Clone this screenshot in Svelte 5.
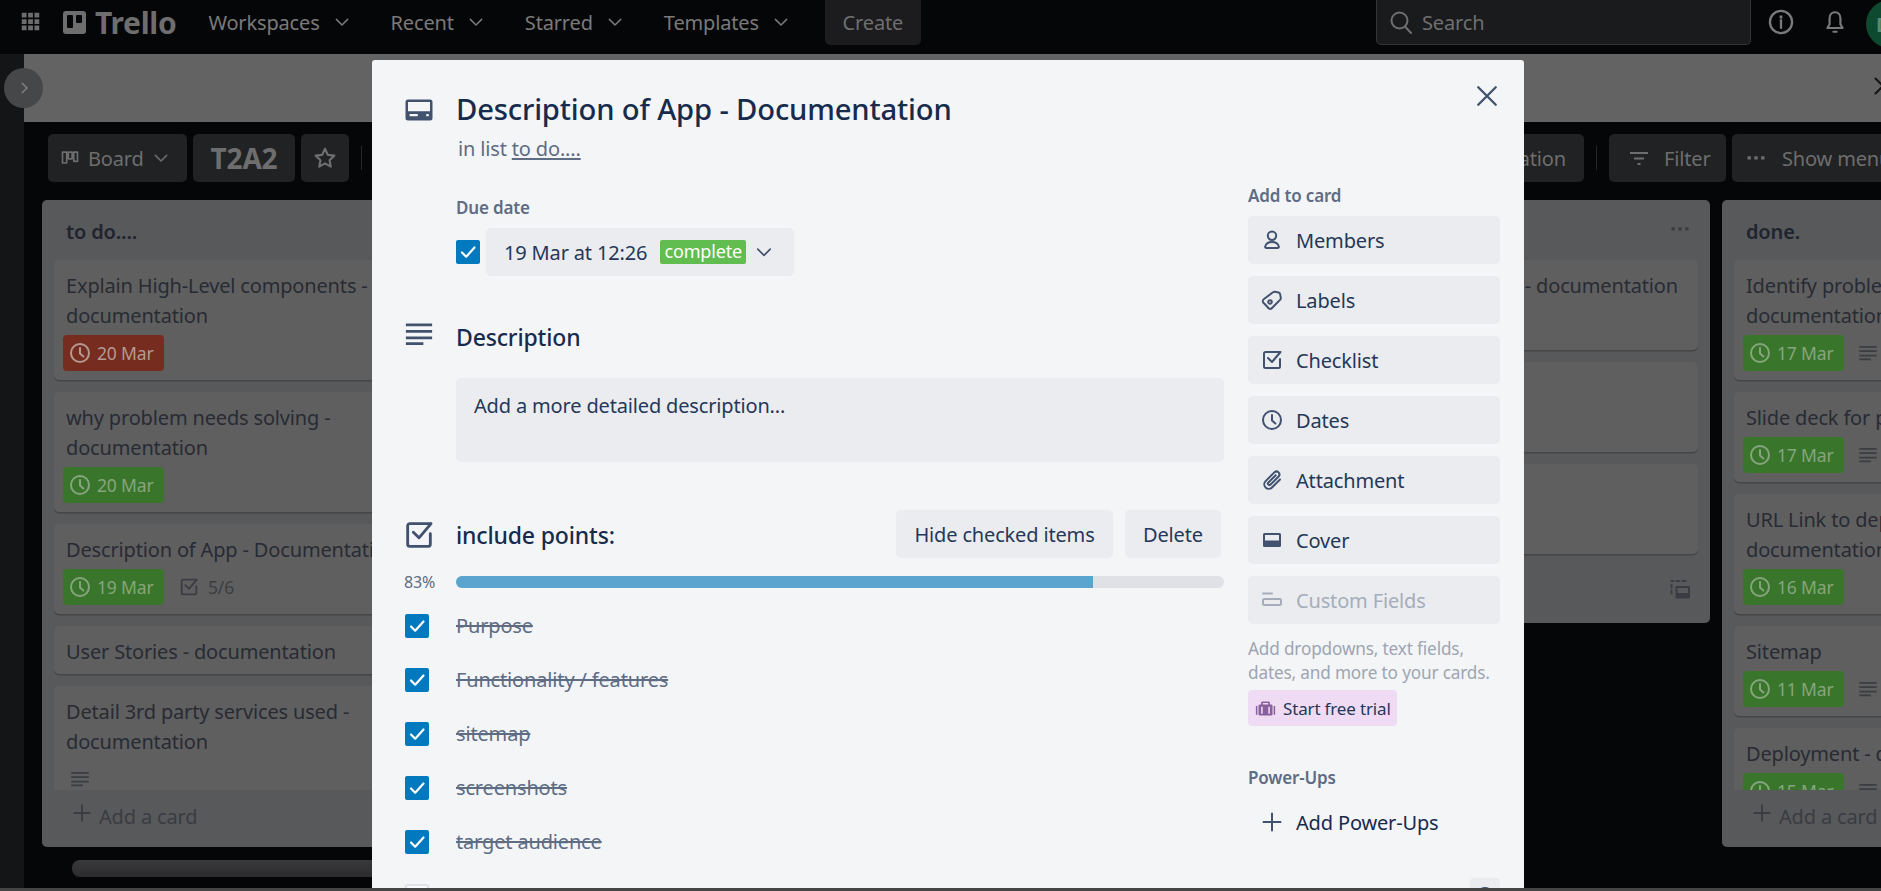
<script>
  const icons = {
    clock: { s: ['M12 3a9 9 0 1 0 0 18a9 9 0 0 0 0-18z', 'M12 7v5.5l3.4 3'] },
    lines: { f: ['M1.5 3.6h21v2.1h-21zM1.5 8.8h21v2.1h-21zM1.5 14h21v2.1h-21zM1.5 18.6h14v2.1h-14z'] },
    card: { f: ['M1.2 5.6a2 2 0 0 1 2-2h17.6a2 2 0 0 1 2 2v12.8a2 2 0 0 1-2 2H3.2a2 2 0 0 1-2-2zM3.2 5.6v7.4h17.6V5.6zM4.5 15.2V17h6.5v-1.8zM17.8 15.2V17h2v-1.8z'] },
    check: { s: ['M20 4H5.5A1.5 1.5 0 0 0 4 5.5v13A1.5 1.5 0 0 0 5.5 20h13a1.5 1.5 0 0 0 1.5-1.5V11', 'M8 10l4 4 8.5-10'] },
    person: { s: ['M12 3.5a4.2 4.2 0 1 0 0 8.4a4.2 4.2 0 0 0 0-8.4z', 'M6.5 20h11c1 0 1.5-.6 1.3-1.5C18 15.5 15.5 14 12 14s-6 1.5-6.8 4.5C5 19.4 5.5 20 6.5 20z'] },
    tag: { s: ['M4 11l9-6.7a2.5 2.5 0 0 1 2-.5l3.5.7a2 2 0 0 1 1.6 1.6l.7 3.5a2.5 2.5 0 0 1-.5 2L12 20a2.5 2.5 0 0 1-3.4.3L4 15.3a2.5 2.5 0 0 1 0-4.3z', 'M10 12.2a1.8 1.8 0 1 0 0 3.6a1.8 1.8 0 0 0 0-3.6z'] },
    clip: { s: ['M20 11.5l-8 8a4.5 4.5 0 0 1-6.4-6.4l9-9a3 3 0 0 1 4.2 4.2l-8.5 8.5a1.5 1.5 0 0 1-2.1-2.1l7.5-7.5'] },
    cover: { f: ['M3 6.5A1.5 1.5 0 0 1 4.5 5h15A1.5 1.5 0 0 1 21 6.5v11a1.5 1.5 0 0 1-1.5 1.5h-15A1.5 1.5 0 0 1 3 17.5zM5 7v5.5h14V7z'] },
    custom: { s: ['M3 5.5h9', 'M4.5 11h15a1.5 1.5 0 0 1 1.5 1.5v3a1.5 1.5 0 0 1-1.5 1.5h-15A1.5 1.5 0 0 1 3 15.5v-3A1.5 1.5 0 0 1 4.5 11z'] },
    plus: { s: ['M12 3.5v17M3.5 12h17'] },
    chevron: { s: ['M4.5 8.5 12 16l7.5-7.5'] },
    close: { s: ['M4.5 4.5l15 15M19.5 4.5l-15 15'] },
    search: { s: ['M10.5 2.5a8 8 0 1 0 0 16a8 8 0 0 0 0-16z', 'M16 16.5l6 6.5'] },
    info: { s: ['M12 2.5a9.5 9.5 0 1 0 0 19a9.5 9.5 0 0 0 0-19z', 'M12 10.5v6.5'], f: ['M10.8 6.5h2.4v2.4h-2.4z'] },
    bell: { s: ['M12 3c-3 0-5 2.3-5 5.5V14l-2 3.5h14L17 14V8.5C17 5.3 15 3 12 3z', 'M10.5 21h3'] },
    star: { s: ['M12 3.5l2.6 5.6 6 .7-4.4 4.2 1.1 6L12 17l-5.3 3 1.1-6-4.4-4.2 6-.7z'] },
    filter: { f: ['M3 6h18v2H3zM7 11.5h10v2H7zM10.5 17h3v2h-3z'] },
    dots: { f: ['M3.5 10.2h3.4v3.4H3.5zM10.3 10.2h3.4v3.4h-3.4zM17.1 10.2h3.4v3.4h-3.4z'] },
    board: { s: ['M3 5h5v13H3zM10 5h4.5v8H10zM16.5 5H21v11h-4.5z'] },
    grid: { f: ['M2 2h5.5v5.5H2zM9.3 2h5.5v5.5H9.3zM16.5 2H22v5.5h-5.5zM2 9.3h5.5v5.5H2zM9.3 9.3h5.5v5.5H9.3zM16.5 9.3H22v5.5h-5.5zM2 16.5h5.5V22H2zM9.3 16.5h5.5V22H9.3zM16.5 16.5H22V22h-5.5z'] },
    brief: { f: ['M7 7.5V5.5A1.5 1.5 0 0 1 8.5 4h7A1.5 1.5 0 0 1 17 5.5v2h1.5A1.5 1.5 0 0 1 20 9v9.5a1.5 1.5 0 0 1-1.5 1.5h-13A1.5 1.5 0 0 1 4 18.5V9a1.5 1.5 0 0 1 1.5-1.5zM9 5.8v1.7h6V5.8zM7 10v8h1.8v-8zM15.2 10v8H17v-8zM1 9h1.7v10H1zM21.3 9H23v10h-1.7z'] },
    template: { s: ['M9 10h11.5a.5.5 0 0 1 .5.5V20a.5.5 0 0 1-.5.5H9a.5.5 0 0 1-.5-.5v-9.5a.5.5 0 0 1 .5-.5z', 'M3.5 4h2M8.5 4h3M14.5 4h3M3.5 8v2.5M3.5 13.5v3'], f: ['M9 16h12v4H9z'] }
  };

  const sideActions = [
    { icon: 'person', label: 'Members' },
    { icon: 'tag', label: 'Labels' },
    { icon: 'check', label: 'Checklist' },
    { icon: 'clock', label: 'Dates' },
    { icon: 'clip', label: 'Attachment' },
    { icon: 'cover', label: 'Cover' },
    { icon: 'custom', label: 'Custom Fields', disabled: true }
  ];

  const items = ['Purpose', 'Functionality / features', 'sitemap', 'screenshots', 'target audience'];

  const nav = ['Workspaces', 'Recent', 'Starred', 'Templates'];

  const lists = [
    {
      title: 'to do....',
      cards: [
        { text: 'Explain High-Level components - documentation', date: '20 Mar', tone: 'red' },
        { text: 'why problem needs solving - documentation', date: '20 Mar', tone: 'green' },
        { text: 'Description of App - Documentation', date: '19 Mar', tone: 'green', progress: '5/6' },
        { text: 'User Stories - documentation' },
        { text: 'Detail 3rd party services used - documentation', desc: true }
      ]
    },
    { title: 'doing', cards: [] },
    { title: 'review', cards: [] },
    {
      title: 'testing',
      menu: true,
      cards: [
        { text: 'Project Management - documentation', date: '21 Mar', tone: 'green' },
        { text: 'Wireframes', date: '21 Mar', tone: 'green' },
        { text: 'Dataflow Diagram', date: '21 Mar', tone: 'green' }
      ]
    },
    {
      title: 'done.',
      cards: [
        { text: 'Identify problem solved by app - documentation', date: '17 Mar', tone: 'green', desc: true },
        { text: 'Slide deck for presentation', date: '17 Mar', tone: 'green', desc: true },
        { text: 'URL Link to deployed app - documentation', date: '16 Mar', tone: 'green' },
        { text: 'Sitemap', date: '11 Mar', tone: 'green', desc: true },
        { text: 'Deployment - documentation', date: '15 Mar', tone: 'green', desc: true }
      ]
    }
  ];
</script>

{#snippet icon(name, cls = '')}
  <svg class="ico {cls}" viewBox="0 0 24 24" aria-hidden="true">
    {#each icons[name].s ?? [] as d}
      <path {d} class="stroke" />
    {/each}
    {#each icons[name].f ?? [] as d}
      <path {d} class="solid" />
    {/each}
  </svg>
{/snippet}

{#snippet tick()}
  <span class="tick">
    <svg viewBox="0 0 24 24" aria-hidden="true"><path d="M6 12.5l4.2 4.2L18.5 7.5" /></svg>
  </span>
{/snippet}

<div class="page">
  <header class="topbar">
    {@render icon('grid', 'i-grid')}
    <div class="logo">
      <span class="logo-mark"><i class="bar-a"></i><i class="bar-b"></i></span>
      <span class="logo-word">Trello</span>
    </div>
    <nav class="nav">
      {#each nav as n}
        <span class="nav-item">{n}{@render icon('chevron', 'i-chev')}</span>
      {/each}
    </nav>
    <button class="create">Create</button>
    <div class="top-right">
      <div class="search">{@render icon('search', 'i-search')}<span>Search</span></div>
      {@render icon('info', 'i-info')}
      {@render icon('bell', 'i-bell')}
      <span class="avatar">D</span>
    </div>
  </header>

  <div class="workspace">
    <aside class="rail">
      <span class="expand">
        <svg viewBox="0 0 24 24" aria-hidden="true"><path d="M9.5 6l6 6-6 6" /></svg>
      </span>
    </aside>
    <main class="board">
      <div class="banner">{@render icon('close', 'i-banner-close')}</div>
      <div class="toolbar">
        <button class="tb tb-board">{@render icon('board', 'i-tb-small')}<span>Board</span>{@render icon('chevron', 'i-chev')}</button>
        <button class="tb tb-name">T2A2</button>
        <button class="tb tb-star">{@render icon('star', 'i-star')}</button>
        <span class="sep"></span>
        <div class="tb-right">
          <button class="tb tb-auto">Automation</button>
          <span class="sep"></span>
          <button class="tb tb-filter">{@render icon('filter', 'i-tb')}<span>Filter</span></button>
          <button class="tb tb-menu">{@render icon('dots', 'i-tb')}<span>Show menu</span></button>
        </div>
      </div>

      <div class="lists">
        {#each lists as list}
          <section class="list">
            <div class="list-head">
              <h2>{list.title}</h2>
              {#if list.menu}{@render icon('dots', 'i-list-menu')}{/if}
            </div>
            <div class="cards">
              {#each list.cards as c}
                <article class="card">
                  <p>{c.text}</p>
                  {#if c.date || c.desc}
                    <div class="badges">
                      {#if c.date}
                        <span class="due {c.tone}">{@render icon('clock', 'i-due')}{c.date}</span>
                      {/if}
                      {#if c.desc}{@render icon('lines', 'i-card-desc')}{/if}
                      {#if c.progress}
                        <span class="progress-badge">{@render icon('check', 'i-badge')}{c.progress}</span>
                      {/if}
                    </div>
                  {/if}
                </article>
              {/each}
            </div>
            {#if list.cards.length}
              <div class="composer">
                {@render icon('plus', 'i-add')}<span>Add a card</span>
                {@render icon('template', 'i-template')}
              </div>
            {/if}
          </section>
        {/each}
      </div>
      <div class="h-scroll"></div>
    </main>
  </div>

  <div class="modal" role="dialog">
    <button class="modal-close" aria-label="Close">{@render icon('close', 'i-close')}</button>

    <div class="main">
      <section class="row title-row">
        <span class="gutter">{@render icon('card', 'i-head')}</span>
        <div>
          <h1>Description of App - Documentation</h1>
          <p class="in-list">in list <u>to do....</u></p>
        </div>
      </section>

      <section class="row due-row">
        <span class="gutter"></span>
        <div>
          <h3>Due date</h3>
          <div class="due-line">
            {@render tick()}
            <button class="due-btn">
              <span>19 Mar at 12:26</span>
              <span class="complete">complete</span>
              {@render icon('chevron', 'i-due-chev')}
            </button>
          </div>
        </div>
      </section>

      <section class="row desc-row">
        <span class="gutter">{@render icon('lines', 'i-head')}</span>
        <div>
          <h2 class="section-title">Description</h2>
          <div class="desc-box">Add a more detailed description...</div>
        </div>
      </section>

      <section class="row check-row">
        <span class="gutter">{@render icon('check', 'i-head-check')}</span>
        <div class="check-head">
          <h2 class="section-title">include points:</h2>
          <div class="check-actions">
            <button class="btn hide-btn">Hide checked items</button>
            <button class="btn delete-btn">Delete</button>
          </div>
        </div>
      </section>

      <section class="row progress-row">
        <span class="gutter pct">83%</span>
        <div class="track"><div class="fill" style="width: 83%"></div></div>
      </section>

      <ul class="items">
        {#each items as item}
          <li class="row item">
            <span class="gutter">{@render tick()}</span>
            <span class="item-text">{item}</span>
          </li>
        {/each}
        <li class="row item">
          <span class="gutter"><span class="tick empty"></span></span>
          <span class="item-text open">tech stack</span>
        </li>
      </ul>
    </div>

    <aside class="side">
      <h3>Add to card</h3>
      <div class="side-actions">
        {#each sideActions as a}
          <button class="btn side-btn" class:disabled={a.disabled}>
            {@render icon(a.icon, 'i-side')}<span>{a.label}</span>
          </button>
        {/each}
      </div>
      <p class="hint">Add dropdowns, text fields, dates, and more to your cards.</p>
      <button class="trial">{@render icon('brief', 'i-brief')}<span>Start free trial</span></button>
      <h3 class="powerups">Power-Ups</h3>
      <button class="add-power">{@render icon('plus', 'i-side')}<span>Add Power-Ups</span></button>
      <span class="corner-btn"><i></i></span>
    </aside>
  </div>

  <div class="bottom-strip"></div>
</div>

<style>
  :global(body) {
    margin: 0;
    background: #050608;
  }
  * {
    box-sizing: border-box;
  }
  .page {
    position: relative;
    width: 100vw;
    height: 100vh;
    overflow: hidden;
    display: flex;
    flex-direction: column;
    font-family: 'Noto Sans', 'Open Sans', sans-serif;
    font-size: 20px;
    letter-spacing: -0.008em;
    color: #172b4d;
  }
  button {
    font: inherit;
    letter-spacing: inherit;
    border: 0;
    margin: 0;
    padding: 0;
    color: inherit;
    background: none;
  }
  h1, h2, h3, p, ul {
    margin: 0;
    padding: 0;
  }
  ul {
    list-style: none;
  }
  .ico {
    display: block;
    flex: none;
    width: 24px;
    height: 24px;
    overflow: visible;
  }
  .stroke {
    fill: none;
    stroke: currentColor;
    stroke-width: 2;
    stroke-linecap: round;
    stroke-linejoin: round;
  }
  .solid {
    fill: currentColor;
    fill-rule: evenodd;
  }

  /* top bar */
  .topbar {
    flex: none;
    height: 54px;
    background: #050608;
    display: flex;
    align-items: flex-start;
    padding-left: 20px;
    color: #7a7a7a;
  }
  .ico.i-grid {
    width: 21px;
    height: 21px;
    margin-top: 11px;
    color: #6d6d6d;
  }
  .logo {
    display: flex;
    align-items: center;
    gap: 9px;
    margin-left: 22px;
    height: 44px;
    color: #6e6e6e;
  }
  .logo-mark {
    width: 23px;
    height: 23px;
    border-radius: 3px;
    background: #6e6e6e;
    display: flex;
    gap: 3px;
    padding: 4px;
    align-items: flex-start;
  }
  .logo-mark i {
    display: block;
    width: 6px;
    background: #050608;
    border-radius: 1px;
  }
  .bar-a { height: 13px; }
  .bar-b { height: 8px; }
  .logo-word {
    font-size: 30px;
    font-weight: 700;
    letter-spacing: -0.3px;
  }
  .nav {
    display: flex;
    margin-left: 32px;
    height: 44px;
    align-items: center;
  }
  .nav-item {
    display: flex;
    align-items: center;
    gap: 13px;
    margin-right: 40px;
    white-space: nowrap;
  }
  .ico.i-chev {
    width: 18px;
    height: 18px;
    stroke-width: 1;
  }
  .create {
    width: 96px;
    height: 45px;
    margin-left: -5px;
    background: #1c1c1e;
    border-radius: 0 0 5px 5px;
    color: #6f6f6f;
  }
  .top-right {
    margin-left: auto;
    margin-right: -33px;
    display: flex;
    align-items: flex-start;
  }
  .search {
    width: 375px;
    height: 45px;
    background: #1a1b1d;
    border: 1px solid #343537;
    border-top: 0;
    border-radius: 0 0 5px 5px;
    display: flex;
    align-items: center;
    gap: 9px;
    padding-left: 12px;
    color: #6f6f6f;
  }
  .ico.i-search {
    width: 24px;
    height: 24px;
  }
  .ico.i-info {
    width: 28px;
    height: 28px;
    margin: 8px 0 0 16px;
  }
  .ico.i-bell {
    width: 26px;
    height: 26px;
    margin: 9px 0 0 27px;
  }
  .avatar {
    width: 48px;
    height: 48px;
    margin: 0 0 0 18px;
    border-radius: 50%;
    background: #0e4a2f;
    color: #5a8a72;
    display: flex;
    align-items: center;
    padding-left: 10px;
    font-weight: 700;
  }

  /* board */
  .workspace {
    flex: 1;
    display: flex;
    min-height: 0;
    position: relative;
  }
  .rail {
    flex: none;
    width: 24px;
    background: #141517;
  }
  .expand {
    position: absolute;
    left: 4px;
    top: 14px;
    width: 39px;
    height: 40px;
    border-radius: 50%;
    background: #464748;
    display: flex;
    align-items: center;
    justify-content: center;
  }
  .expand svg {
    width: 20px;
    height: 20px;
    fill: none;
    stroke: #7d7d7d;
    stroke-width: 2;
  }
  .board {
    flex: 1;
    min-width: 0;
    display: flex;
    flex-direction: column;
    background: #050608;
  }
  .banner {
    flex: none;
    height: 68px;
    background: #636363;
    display: flex;
    justify-content: flex-end;
    padding-top: 20px;
  }
  .ico.i-banner-close {
    width: 24px;
    height: 24px;
    margin-right: -14px;
    color: #151515;
  }
  .toolbar {
    flex: none;
    height: 78px;
    display: flex;
    align-items: flex-start;
    gap: 6px;
    padding: 12px 0 0 24px;
  }
  .tb {
    height: 48px;
    background: #212224;
    border-radius: 5px;
    color: #6e6e6e;
    display: flex;
    align-items: center;
    white-space: nowrap;
  }
  .tb-board {
    width: 139px;
    padding-left: 12px;
    gap: 8px;
  }
  .ico.i-tb-small {
    width: 20px;
    height: 20px;
  }
  .tb-name {
    width: 102px;
    justify-content: center;
    font-size: 28px;
    font-weight: 700;
  }
  .tb-star {
    width: 48px;
    justify-content: center;
  }
  .ico.i-star {
    width: 26px;
    height: 26px;
  }
  .sep {
    flex: none;
    width: 1px;
    height: 24px;
    margin: 12px 6px;
    background: #26272a;
  }
  .tb-right {
    margin-left: auto;
    margin-right: -50px;
    display: flex;
    align-items: flex-start;
    gap: 6px;
  }
  .tb-auto {
    width: 220px;
    justify-content: flex-end;
    padding-right: 18px;
  }
  .tb-filter {
    width: 117px;
    padding-left: 18px;
    gap: 13px;
  }
  .tb-menu {
    width: 199px;
    padding-left: 12px;
    gap: 14px;
  }
  .ico.i-tb {
    width: 24px;
    height: 24px;
  }

  .lists {
    flex: none;
    height: 647px;
    display: flex;
    align-items: flex-start;
    gap: 12px;
    padding-left: 18px;
  }
  .list {
    flex: none;
    width: 408px;
    background: #58595b;
    border-radius: 5px;
    overflow: hidden;
  }
  .list-head {
    height: 60px;
    padding: 17px 18px 0 24px;
    display: flex;
    justify-content: space-between;
  }
  .list-head h2 {
    font-size: 20px;
    font-weight: 600;
    line-height: 30px;
    color: #20242e;
  }
  .ico.i-list-menu {
    width: 24px;
    height: 24px;
    color: #3d3e42;
  }
  .cards {
    max-height: 530px;
    overflow: hidden;
    padding: 0 12px;
  }
  .card {
    background: #5f5f60;
    border-radius: 5px;
    box-shadow: 0 1.5px 0 #454648;
    padding: 11px 12px 7px;
    margin-bottom: 12px;
  }
  .card p {
    line-height: 30px;
    color: #282b33;
  }
  .badges {
    display: flex;
    align-items: center;
    min-height: 36px;
    margin: 4px 0 2px -3px;
    color: #3b3d41;
    white-space: nowrap;
  }
  .due {
    width: 101px;
    height: 36px;
    border-radius: 4px;
    display: flex;
    align-items: center;
    gap: 7px;
    padding-left: 7px;
    font-size: 17.5px;
  }
  .due.red {
    background: #772c20;
    color: #b39a93;
  }
  .due.green {
    background: #3a752c;
    color: #86a57d;
  }
  .ico.i-due {
    width: 24px;
    height: 24px;
    margin: 0 -2px;
  }
  .ico.i-card-desc {
    width: 20px;
    height: 20px;
    margin-left: 14px;
  }
  .ico.i-card-desc:first-child {
    margin-left: 7px;
  }
  .progress-badge {
    display: flex;
    align-items: center;
    gap: 8px;
    margin-left: 14px;
    font-size: 17.5px;
  }
  .ico.i-badge {
    width: 22px;
    height: 22px;
  }
  .composer {
    position: relative;
    height: 57px;
    display: flex;
    align-items: flex-start;
    gap: 6px;
    padding: 10px 0 0 29px;
    color: #3a3c41;
    line-height: 30px;
  }
  .composer span {
    margin-top: 2px;
  }
  .ico.i-add {
    width: 22px;
    height: 22px;
    margin-top: 2px;
    stroke-width: 1;
  }
  .ico.i-template {
    width: 24px;
    height: 24px;
    margin: 1px 18px 0 auto;
    display: none;
  }
  .list:nth-child(4) .ico.i-template {
    display: block;
  }
  .h-scroll {
    flex: none;
    width: 1350px;
    height: 17px;
    margin: 13px 0 0 48px;
    border-radius: 8px;
    background: linear-gradient(#39393b, #2c2c2e);
  }

  /* modal */
  .modal {
    position: absolute;
    left: 372px;
    top: 60px;
    bottom: 3px;
    width: 1152px;
    background: #f4f5f7;
    border-radius: 3px 3px 0 0;
    overflow: hidden;
    display: flex;
    gap: 24px;
    padding-right: 24px;
  }
  .modal-close {
    position: absolute;
    top: 18px;
    right: 19px;
    width: 36px;
    height: 36px;
    display: flex;
    align-items: center;
    justify-content: center;
    color: #42526e;
  }
  .ico.i-close {
    width: 28px;
    height: 28px;
  }
  .main {
    flex: none;
    width: 852px;
  }
  .row {
    display: grid;
    grid-template-columns: 84px 1fr;
  }
  .gutter {
    display: block;
    padding-left: 32px;
    color: #42526e;
  }
  .ico.i-head {
    width: 30px;
    height: 30px;
  }
  .ico.i-head-check {
    width: 34px;
    height: 34px;
    margin: -2px 0 0 -2px;
  }
  .title-row {
    padding-top: 32px;
  }
  .title-row .gutter {
    padding-top: 3px;
  }
  h1 {
    font-size: 29.2px;
    font-weight: 500;
    line-height: 35px;
  }
  .in-list {
    margin: 7px 0 0 2px;
    line-height: 30px;
    color: #5e6c84;
  }
  .in-list u {
    text-underline-offset: 2px;
  }
  .due-row {
    padding-top: 32px;
  }
  h3 {
    font-size: 17px;
    font-weight: 600;
    line-height: 24px;
    color: #5e6c84;
  }
  .due-line {
    display: flex;
    align-items: center;
    gap: 6px;
    margin-top: 8px;
  }
  .tick {
    flex: none;
    display: block;
    width: 24px;
    height: 24px;
    border-radius: 2px;
    background: #0079bf;
  }
  .tick svg {
    display: block;
    width: 24px;
    height: 24px;
    fill: none;
    stroke: #fff;
    stroke-width: 2.2;
    stroke-linecap: round;
    stroke-linejoin: round;
  }
  .tick.empty {
    background: #fafbfc;
    box-shadow: inset 0 0 0 2px #dfe1e6;
  }
  .due-btn {
    width: 308px;
    height: 48px;
    background: #eaecf0;
    border-radius: 5px;
    display: flex;
    align-items: center;
    padding-left: 18px;
    color: #253858;
  }
  .complete {
    width: 86px;
    height: 24px;
    margin-left: 13px;
    background: #61bd4f;
    color: #fff;
    border-radius: 2px;
    font-size: 18px;
    line-height: 23px;
    text-align: center;
  }
  .ico.i-due-chev {
    width: 20px;
    height: 20px;
    margin-left: 8px;
    stroke-width: 1.5;
    color: #42526e;
  }
  .desc-row {
    padding-top: 43px;
  }
  .section-title {
    font-size: 23px;
    font-weight: 500;
    line-height: 36px;
  }
  .desc-box {
    height: 84px;
    margin-top: 23px;
    padding: 13px 18px 0 18px;
    background: #eaecf0;
    border-radius: 5px;
    line-height: 30px;
    color: #253858;
  }
  .check-row {
    padding-top: 48px;
  }
  .check-row .gutter {
    padding-top: 10px;
  }
  .check-head {
    display: flex;
    justify-content: space-between;
    align-items: center;
    padding-right: 3px;
  }
  .check-head .section-title {
    margin-top: 2px;
  }
  .check-actions {
    display: flex;
    gap: 12px;
  }
  .btn {
    height: 48px;
    background: #eaecf0;
    border-radius: 5px;
    color: #253858;
  }
  .hide-btn {
    width: 217px;
  }
  .delete-btn {
    width: 96px;
  }
  .progress-row {
    padding-top: 18px;
    align-items: center;
    height: 30px;
  }
  .progress-row .gutter {
    padding-left: 32px;
    font-size: 16px;
    color: #5e6c84;
    line-height: 12px;
  }
  .track {
    height: 12px;
    border-radius: 6px;
    background: #dfe1e6;
    overflow: hidden;
  }
  .fill {
    height: 100%;
    background: #5ba4cf;
  }
  .items {
    padding-top: 11px;
  }
  .item {
    height: 54px;
    align-items: center;
  }
  .item .gutter {
    padding-left: 33px;
    height: 24px;
  }
  .item-text {
    text-decoration: line-through;
    color: #5e6c84;
    line-height: 30px;
  }
  .item-text.open {
    text-decoration: none;
    color: #172b4d;
  }

  .side {
    flex: none;
    width: 252px;
    padding-top: 124px;
    display: flex;
    flex-direction: column;
    align-items: flex-start;
  }
  .side > * {
    flex: none;
  }
  .side-actions {
    display: flex;
    flex-direction: column;
    gap: 12px;
    width: 100%;
    margin-top: 8px;
  }
  .side-btn {
    width: 100%;
    display: flex;
    align-items: center;
    gap: 12px;
    padding-left: 12px;
    text-align: left;
  }
  .side-btn .i-side {
    color: #42526e;
  }
  .side-btn.disabled,
  .side-btn.disabled .i-side {
    color: #a5adba;
  }
  .hint {
    margin-top: 13px;
    font-size: 17.2px;
    line-height: 24px;
    color: #9da5b2;
  }
  .trial {
    height: 36px;
    width: 149px;
    margin-top: 5px;
    background: #efdbf3;
    border-radius: 4px;
    display: flex;
    align-items: center;
    gap: 7px;
    padding-left: 7px;
    font-size: 17px;
    color: #253858;
  }
  .ico.i-brief {
    width: 21px;
    height: 21px;
    color: #89609e;
  }
  .powerups {
    margin-top: 40px;
  }
  .add-power {
    height: 48px;
    margin-top: 8px;
    display: flex;
    align-items: center;
    gap: 12px;
    padding-left: 12px;
  }
  .add-power .i-side {
    color: #42526e;
  }
  .corner-btn {
    align-self: flex-end;
    width: 30px;
    height: 30px;
    margin-top: 32px;
    background: #eaecf0;
    border-radius: 4px;
    padding: 9px 0 0 6px;
  }
  .corner-btn i {
    display: block;
    width: 18px;
    height: 18px;
    border-radius: 50%;
    border: 2px solid #42526e;
  }
  .bottom-strip {
    position: absolute;
    left: 0;
    right: 0;
    bottom: 0;
    height: 3px;
    background: #454545;
  }
</style>
